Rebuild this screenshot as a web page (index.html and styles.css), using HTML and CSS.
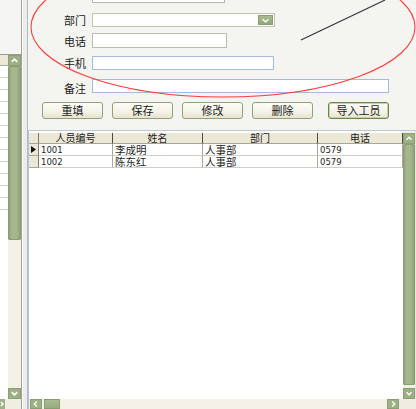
FILE: index.html
```html
<!DOCTYPE html>
<html>
<head>
<meta charset="utf-8">
<link rel="stylesheet" href="styles.css">
</head>
<body>
<div class="app">
  <div class="left">
    <div class="left-top"></div>
    <div class="left-grid">
      <div class="left-list">
        <div class="lhead"></div>
        <div class="lrows"></div>
      </div>
      <div class="vscroll left-v">
        <div class="sbtn"><svg viewBox="0 0 12 11" width="12" height="11"><polyline points="3,7 6,4 9,7" /></svg></div>
        <div class="thumb left-thumb"></div>
        <div class="track"></div>
        <div class="sbtn"><svg viewBox="0 0 12 11" width="12" height="11"><polyline points="3,4 6,7 9,4" /></svg></div>
      </div>
    </div>
    <div class="hscroll left-h">
      <div class="sbtn mini"><svg viewBox="0 0 5 10" width="5" height="10"><polyline points="1,3 3,5 1,7" /></svg></div>
    </div>
  </div>
  <div class="splitter"></div>
  <div class="main">
    <div class="form">
      <div class="frow r0"><span class="flabel"></span><div class="stub"></div></div>
      <div class="frow r1"><span class="flabel">部门</span>
        <div class="select"><div class="sel-btn"><svg viewBox="0 0 15 11" width="15" height="11"><polyline points="4,4 7.5,7 11,4" /></svg></div></div>
      </div>
      <div class="frow r2"><span class="flabel">电话</span><div class="input w-tel"></div></div>
      <div class="frow r3"><span class="flabel">手机</span><div class="input blue w-mob"></div></div>
      <div class="frow r4"><span class="flabel low">备注</span><div class="input blue w-note"></div></div>
      <div class="buttons">
        <button class="btn">重填</button>
        <button class="btn">保存</button>
        <button class="btn">修改</button>
        <button class="btn">删除</button>
        <button class="btn focus">导入工员</button>
      </div>
    </div>
    <div class="grid">
      <div class="grid-body">
        <div class="table">
          <div class="hc rh"></div>
          <div class="hc">人员编号</div>
          <div class="hc">姓名</div>
          <div class="hc">部门</div>
          <div class="hc">电话</div>

          <div class="rc"><svg viewBox="0 0 9 11" width="9" height="11"><polygon points="2,2 7,5.5 2,9" /></svg></div>
          <div class="dc num">1001</div>
          <div class="dc">李成明</div>
          <div class="dc">人事部</div>
          <div class="dc num">0579</div>

          <div class="rc"></div>
          <div class="dc num">1002</div>
          <div class="dc">陈东红</div>
          <div class="dc">人事部</div>
          <div class="dc num">0579</div>
        </div>
        <div class="vscroll grid-v">
          <div class="sbtn"><svg viewBox="0 0 12 11" width="12" height="11"><polyline points="3,7 6,4 9,7" /></svg></div>
          <div class="thumb grid-thumb"></div>
          <div class="track"></div>
          <div class="sbtn"><svg viewBox="0 0 12 11" width="12" height="11"><polyline points="3,4 6,7 9,4" /></svg></div>
        </div>
        <div class="edge"></div>
      </div>
      <div class="hscroll grid-h">
        <div class="sbtn hbtn"><svg viewBox="0 0 12 10" width="12" height="10"><polyline points="7,2 4,5 7,8" /></svg></div>
        <div class="hthumb"></div>
        <div class="htrack"></div>
        <div class="sbtn hbtn"><svg viewBox="0 0 12 10" width="12" height="10"><polyline points="5,2 8,5 5,8" /></svg></div>
        <div class="corner"></div>
      </div>
    </div>
  </div>
</div>
<svg class="annot" viewBox="0 0 416 409" width="416" height="409">
  <ellipse cx="223" cy="27" rx="192" ry="70" fill="none" stroke="#ff3b3b" stroke-width="1.1" />
  <line x1="301" y1="40" x2="385" y2="0" stroke="#333" stroke-width="1.1" />
</svg>
</body>
</html>
```

FILE: styles.css
```css
* { box-sizing: border-box; }
html, body { margin: 0; padding: 0; }
body {
  width: 416px;
  height: 409px;
  overflow: hidden;
  position: relative;
  background: #f4f4f1;
  font-family: "Noto Sans CJK SC", "DejaVu Sans", sans-serif;
  color: #1e1e1e;
}
.app { display: flex; width: 416px; height: 409px; }

/* left pane */
.left {
  width: 22px;
  display: flex;
  flex-direction: column;
  border-right: 1px solid #a3a39a;
}
.left-top { height: 54px; background: #f5f5f3; }
.left-grid {
  flex: 1;
  display: flex;
  border-top: 1px solid #9c9c94;
  background: #fff;
}
.left-list { width: 8px; display: flex; flex-direction: column; }
.lhead { height: 11px; background: #ebe8d8; border-bottom: 1px solid #b0ad9e; }
.lrows {
  height: 150px;
  background: repeating-linear-gradient(to bottom, #fff 0, #fff 11px, #d2d2cc 11px, #d2d2cc 12px);
}
.vscroll { display: flex; flex-direction: column; background: #f3f1e7; }
.left-v { width: 13px; }
.sbtn {
  height: 11px;
  background: #9db085;
  border: 1px solid #8c9f73;
  display: flex;
  align-items: center;
  justify-content: center;
}
.sbtn svg { display: block; }
.sbtn polyline { fill: none; stroke: #fff; stroke-width: 1.6; }
.thumb {
  background: linear-gradient(to right, #91a478 0, #a7b991 30%, #a3b58c 70%, #8fa276 100%);
  border: 1px solid #8a9c71;
  border-radius: 1px;
}
.left-thumb { height: 174px; }
.track { flex: 1; background: #f3f1e7; }
.left-h { height: 10px; display: flex; background: #f0eee3; }
.mini { width: 5px; height: 10px; border: none; }

.splitter {
  width: 6px;
  background: #eeede5;
  border-left: 1px solid #fafaf8;
  border-right: 1px solid #a9bcd6;
}

/* main */
.main { flex: 1; display: flex; flex-direction: column; }
.form { height: 130px; background: #f4f4f1; }
.frow { display: flex; align-items: center; }
.flabel {
  width: 58px;
  margin-right: 6px;
  text-align: right;
  font-size: 11px;
  line-height: 12px;
  color: #222;
}
.flabel.low { padding-top: 3px; }
.r0 { height: 3px; }
.stub {
  width: 133px;
  height: 3px;
  background: #fff;
  border: 1px solid #b6b6a8;
  border-top: none;
}
.r1 { margin-top: 10px; height: 14px; }
.r2 { margin-top: 6px; height: 15px; }
.r3 { margin-top: 8px; height: 14px; }
.r4 { margin-top: 9px; height: 14px; }
.select {
  width: 183px;
  height: 14px;
  background: #fff;
  border: 1px solid #c2c6ae;
  display: flex;
  justify-content: flex-end;
  align-items: center;
  padding-right: 1px;
}
.sel-btn {
  width: 15px;
  height: 10px;
  background: linear-gradient(to bottom, #a8ba90, #93a77a);
  border: 1px solid #8a9d70;
  display: flex;
  align-items: center;
  justify-content: center;
}
.sel-btn polyline { fill: none; stroke: #fff; stroke-width: 1.6; }
.input { height: 100%; background: #fff; border: 1px solid #bcbcae; }
.input.blue { border-color: #a6badb; }
.w-tel { width: 135px; }
.w-mob { width: 182px; }
.w-note { width: 297px; }

.buttons {
  display: flex;
  gap: 9px;
  margin-top: 9px;
  margin-left: 14px;
  height: 17px;
}
.btn {
  width: 61px;
  height: 17px;
  padding: 0;
  font-family: "Noto Sans CJK SC", sans-serif;
  font-size: 11px;
  line-height: 13px;
  color: #1a1a1a;
  background: linear-gradient(to bottom, #fdfdf8 0%, #f4f2e6 60%, #e6e3cf 100%);
  border: 1px solid #92a17a;
  border-radius: 3px;
}
.btn.focus { margin-left: 6px; border-color: #6f8449; box-shadow: inset 0 0 0 1px #c6d1ae; }

/* grid */
.grid {
  flex: 1;
  display: flex;
  flex-direction: column;
  border-top: 1px solid #b8c8dc;
  border-left: 1px solid #b3c4da;
  background: #fff;
}
.grid-body { flex: 1; display: flex; }
.table {
  flex: 1;
  padding-top: 2px;
  display: grid;
  grid-template-columns: 10px 74px 90px 115px 85px;
  grid-template-rows: 11px 12px 12px;
  align-content: start;
}
.hc {
  background: #ebe8d7;
  border-right: 1px solid #4a4a44;
  border-bottom: 1px solid #a9a696;
  font-size: 10px;
  line-height: 10px;
  text-align: center;
  color: #222;
  white-space: nowrap;
}
.hc.rh { border-right-color: #7a7a70; }
.rc {
  background: #ebe8d7;
  border-right: 1px solid #7a7a70;
  border-bottom: 1px solid #a9a696;
  display: flex;
  align-items: center;
}
.rc polygon { fill: #111; }
.dc {
  border-right: 1px solid #a8a8a0;
  border-bottom: 1px solid #cfcfc8;
  font-size: 10.5px;
  line-height: 11px;
  padding-left: 2px;
  white-space: nowrap;
}
.dc.num { font-family: "DejaVu Sans", sans-serif; font-size: 8.5px; padding-top: 1px; line-height: 10px; }
.grid-v { width: 12px; padding-top: 2px; background: #f3f1e7; }
.grid-thumb { height: 241px; }
.edge { width: 1px; background: #e6e4da; }
.grid-h {
  height: 10px;
  display: flex;
  background: #f3f1e7;
  padding-left: 1px;
}
.hbtn { width: 12px; height: 10px; }
.hthumb {
  width: 16px;
  margin-left: 2px;
  background: linear-gradient(to bottom, #a9bb92, #97aa7e);
  border: 1px solid #8a9c71;
}
.htrack { flex: 1; }
.corner { width: 17px; background: #efede1; }

.annot {
  position: absolute;
  left: 0;
  top: 0;
  pointer-events: none;
}
```
